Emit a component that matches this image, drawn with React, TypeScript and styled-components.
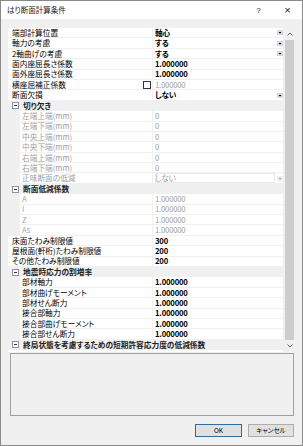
import styled, { createGlobalStyle } from "styled-components";

const GlobalStyle = createGlobalStyle`
  html, body {
    margin: 0;
    padding: 0;
    background: #f0f0f0;
  }
  body {
    font-family: "Noto Sans CJK JP", "Noto Sans", sans-serif;
    font-feature-settings: "palt";
    color: #000;
  }
`;

type Prop = {
  kind: "prop";
  label: string;
  value: string;
  sub?: boolean;
  dim?: boolean;
  bold?: boolean;
  dropdown?: "button" | "plain";
  check?: boolean;
};
type Cat = { kind: "cat"; label: string };
type Item = Prop | Cat;

const p = (label: string, value: string, extra: Partial<Prop> = {}): Prop => ({
  kind: "prop",
  label,
  value,
  ...extra,
});
const cat = (label: string): Cat => ({ kind: "cat", label });

const items: Item[] = [
  p("端部計算位置", "軸心", { bold: true, dropdown: "button" }),
  p("軸力の考慮", "する", { bold: true, dropdown: "button" }),
  p("2軸曲げの考慮", "する", { bold: true, dropdown: "button" }),
  p("面内座屈長さ係数", "1.000000", { bold: true }),
  p("面外座屈長さ係数", "1.000000", { bold: true }),
  p("横座屈補正係数", "1.000000", { dim: true, check: true }),
  p("断面欠損", "しない", { bold: true, dropdown: "button" }),
  cat("切り欠き"),
  p("左端上端(mm)", "0", { sub: true, dim: true }),
  p("左端下端(mm)", "0", { sub: true, dim: true }),
  p("中央上端(mm)", "0", { sub: true, dim: true }),
  p("中央下端(mm)", "0", { sub: true, dim: true }),
  p("右端上端(mm)", "0", { sub: true, dim: true }),
  p("右端下端(mm)", "0", { sub: true, dim: true }),
  p("正味断面の低減", "しない", { sub: true, dim: true, dropdown: "plain" }),
  cat("断面低減係数"),
  p("A", "1.000000", { sub: true, dim: true }),
  p("I", "1.000000", { sub: true, dim: true }),
  p("Z", "1.000000", { sub: true, dim: true }),
  p("As", "1.000000", { sub: true, dim: true }),
  p("床面たわみ制限値", "300", { bold: true }),
  p("屋根面(軒桁)たわみ制限値", "200", { bold: true }),
  p("その他たわみ制限値", "200", { bold: true }),
  cat("地震時応力の割増率"),
  p("部材軸力", "1.000000", { sub: true, bold: true }),
  p("部材曲げモーメント", "1.000000", { sub: true, bold: true }),
  p("部材せん断力", "1.000000", { sub: true, bold: true }),
  p("接合部軸力", "1.000000", { sub: true, bold: true }),
  p("接合部曲げモーメント", "1.000000", { sub: true, bold: true }),
  p("接合部せん断力", "1.000000", { sub: true, bold: true }),
  cat("終局状態を考慮するための短期許容応力度の低減係数"),
];

const ROW_H = 10.4;

const App = () => {
  return (
    <>
      <GlobalStyle />
      <Window>
        <TitleBar>
          <Title>はり断面計算条件</Title>
          <TitleButton>?</TitleButton>
          <TitleButton $big>×</TitleButton>
        </TitleBar>
        <Body>
          <GridFrame>
            <Rows>
              {items.map((it, i) =>
                it.kind === "cat" ? (
                  <CategoryRow key={i}>
                    <Collapse />
                    <CategoryText>{it.label}</CategoryText>
                  </CategoryRow>
                ) : (
                  <Row key={i}>
                    <LabelCell $sub={it.sub} $dim={it.dim}>
                      <span>{it.label}</span>
                      {it.check && <CheckBox />}
                    </LabelCell>
                    <ValueCell $dim={it.dim} $bold={it.bold}>
                      <ValueText $boxed={it.dropdown === "plain"}>{it.value}</ValueText>
                      {it.dropdown === "button" && <DropButton />}
                      {it.dropdown === "plain" && <DropPlain />}
                    </ValueCell>
                  </Row>
                )
              )}
            </Rows>
            <ScrollBar>
              <ScrollArrow>
                <Chevron up />
              </ScrollArrow>
              <Thumb />
              <ScrollArrow>
                <Chevron />
              </ScrollArrow>
            </ScrollBar>
          </GridFrame>
          <Description />
          <Footer>
            <DlgButton $primary>OK</DlgButton>
            <DlgButton>キャンセル</DlgButton>
          </Footer>
        </Body>
      </Window>
    </>
  );
};

export default App;

const Chevron = ({ up }: { up?: boolean }) => (
  <svg width="6" height="4" viewBox="0 0 6 4">
    <path
      d={up ? "M0.5 3.5 L3 1 L5.5 3.5" : "M0.5 0.5 L3 3 L5.5 0.5"}
      fill="none"
      stroke="#606060"
      strokeWidth="1"
    />
  </svg>
);

const DropButton = () => (
  <DropBox>
    <svg width="6" height="5" viewBox="0 0 6 5">
      <rect x="0" y="0" width="6" height="5" rx="0.5" fill="#d6d7e2" />
      <path d="M1.5 2 L4.5 2 L3 3.6 Z" fill="#000" />
    </svg>
  </DropBox>
);

const DropPlain = () => (
  <DropBox>
    <svg width="6" height="5" viewBox="0 0 6 5">
      <rect x="0" y="0" width="6" height="5" rx="0.5" fill="#ececf0" />
      <path d="M1.5 2 L4.5 2 L3 3.6 Z" fill="#9a9a9a" />
    </svg>
  </DropBox>
);

const Collapse = () => (
  <svg width="7" height="7" viewBox="0 0 7 7" style={{ flex: "none" }}>
    <rect x="0.5" y="0.5" width="6" height="6" fill="#fff" stroke="#8f8f9f" />
    <path d="M2 3.5 H5" stroke="#333" strokeWidth="1" />
  </svg>
);

const Window = styled.div`
  width: 303px;
  height: 446px;
  box-sizing: border-box;
  border: 1px solid #8a8a8a;
  background: #f0f0f0;
  display: flex;
  flex-direction: column;
  overflow: hidden;
`;

const TitleBar = styled.div`
  height: 18px;
  background: #fff;
  display: flex;
  align-items: center;
  padding-left: 6px;
`;

const Title = styled.div`
  flex: 1;
  font-size: 7.5px;
  line-height: 1;
  color: #1a1a1a;
`;

const TitleButton = styled.div<{ $big?: boolean }>`
  width: 29px;
  height: 18px;
  display: flex;
  align-items: center;
  justify-content: center;
  font-family: "Liberation Sans", sans-serif;
  font-size: ${(p) => (p.$big ? "11px" : "8px")};
  color: #222;
`;

const Body = styled.div`
  flex: 1;
  display: flex;
  flex-direction: column;
  padding: 9px 7px 0 7px;
`;

const GridFrame = styled.div`
  display: flex;
  gap: 1px;
  height: 324px;
`;

const Rows = styled.div`
  flex: 1;
  display: flex;
  flex-direction: column;
  background: #fff;
  overflow: hidden;
`;

const Row = styled.div`
  height: ${ROW_H}px;
  flex: none;
  display: grid;
  grid-template-columns: 144px 1fr;
  box-sizing: border-box;
  border-bottom: 1px solid #f0f0f0;
  font-size: 7.7px;
  line-height: 1;
`;

const LabelCell = styled.div<{ $sub?: boolean; $dim?: boolean }>`
  box-sizing: border-box;
  display: flex;
  align-items: center;
  justify-content: space-between;
  padding-left: ${(p) => (p.$sub ? "2px" : "4px")};
  padding-right: 1px;
  border-left: ${(p) => (p.$sub ? "12px solid #f0f0f0" : "none")};
  color: ${(p) => (p.$dim && p.$sub ? "#a0a0a0" : "#000")};
  white-space: nowrap;
  overflow: hidden;
`;

const CheckBox = styled.div`
  width: 8px;
  height: 8px;
  box-sizing: border-box;
  border: 1px solid #333;
  background: #fff;
  flex: none;
`;

const ValueCell = styled.div<{ $dim?: boolean; $bold?: boolean }>`
  display: flex;
  align-items: center;
  border-left: 1px solid #f0f0f0;
  padding-left: 2px;
  color: ${(p) => (p.$dim ? "#a0a0a0" : "#000")};
  font-weight: ${(p) => (p.$bold ? 700 : 400)};
  white-space: nowrap;
  overflow: hidden;
`;

const ValueText = styled.div<{ $boxed?: boolean }>`
  flex: 1;
  align-self: stretch;
  display: flex;
  align-items: center;
  letter-spacing: -0.2px;
  box-shadow: ${(p) => (p.$boxed ? "inset 0 0 0 1px #e8e8e8" : "none")};
  margin-right: ${(p) => (p.$boxed ? "2px" : "0")};
`;

const DropBox = styled.div`
  flex: none;
  width: 6px;
  height: 5px;
  display: flex;
`;

const CategoryRow = styled.div`
  height: ${ROW_H}px;
  flex: none;
  box-sizing: border-box;
  display: flex;
  align-items: center;
  gap: 4px;
  padding-left: 4px;
  background: #f0f0f0;
`;

const CategoryText = styled.span`
  font-size: 7.7px;
  line-height: 1;
  font-weight: 700;
  color: #222;
  white-space: nowrap;
`;

const ScrollBar = styled.div`
  width: 11px;
  display: flex;
  flex-direction: column;
  background: #f0f0f0;
`;

const ScrollArrow = styled.div`
  height: 12px;
  display: flex;
  align-items: center;
  justify-content: center;
`;

const Thumb = styled.div`
  flex: 1;
  margin: 0 1px;
  background: #cdcdcd;
`;

const Description = styled.div`
  margin: 1px 1px 0 2px;
  height: 63px;
  box-sizing: border-box;
  border: 1px solid #a0a0a0;
  background: #f0f0f0;
`;

const Footer = styled.div`
  display: flex;
  justify-content: flex-end;
  gap: 6px;
  margin-top: 8px;
  padding-right: 1px;
`;

const DlgButton = styled.div<{ $primary?: boolean }>`
  width: ${(p) => (p.$primary ? "47px" : "46px")};
  height: 13px;
  box-sizing: border-box;
  border: 1px solid ${(p) => (p.$primary ? "#0078d7" : "#adadad")};
  background: #e1e1e1;
  display: flex;
  align-items: center;
  justify-content: center;
  font-size: 6.5px;
  line-height: 1;
  color: #000;
`;
